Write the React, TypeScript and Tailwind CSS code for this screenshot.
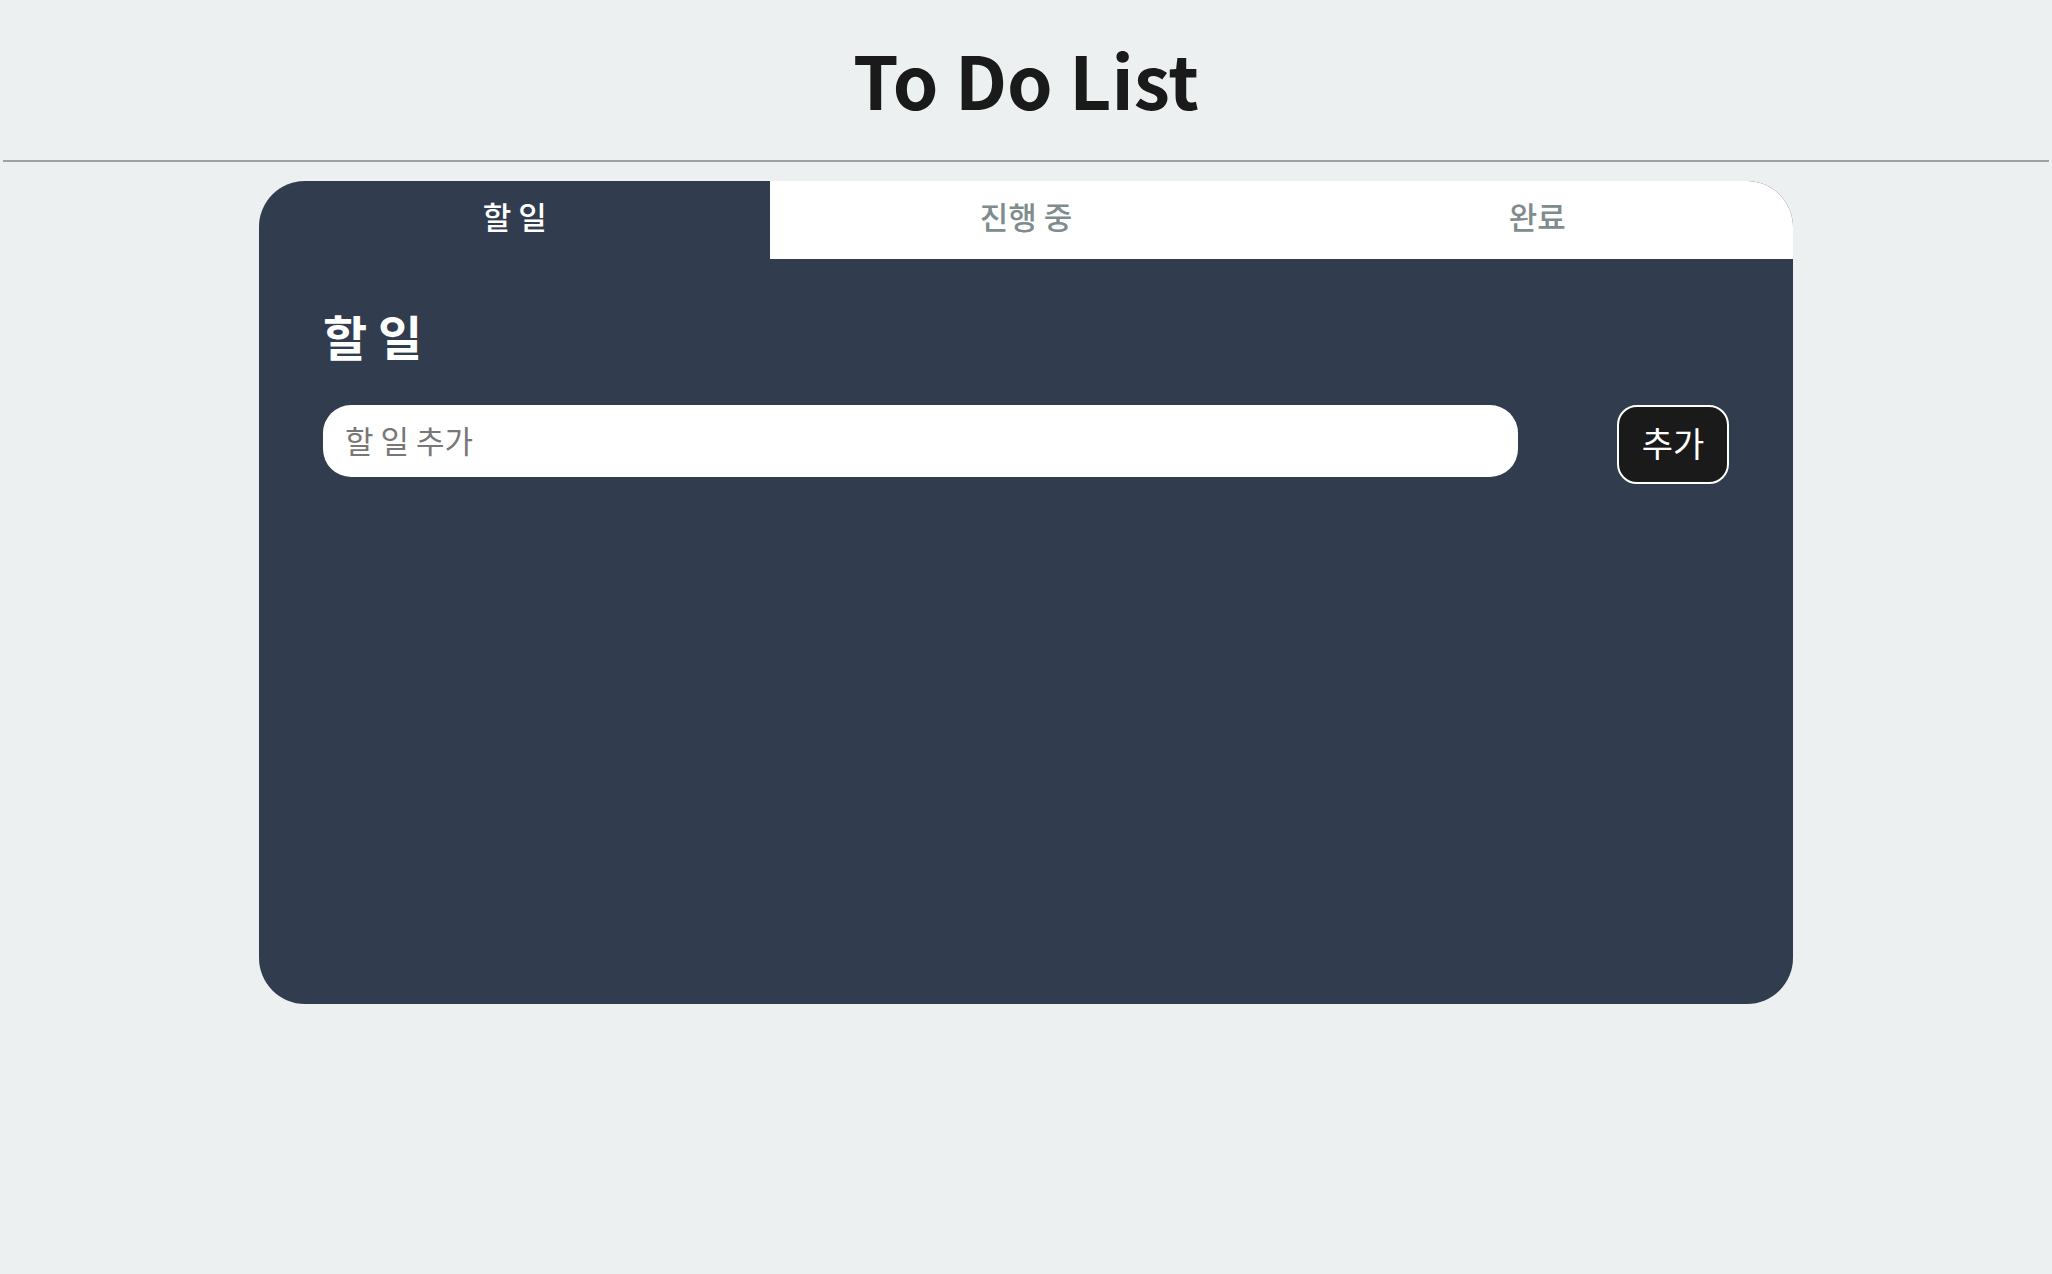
import { useState } from "react"

const tabs = ["할 일", "진행 중", "완료"]

export default function App() {
  const [active, setActive] = useState(0)
  const [text, setText] = useState("")

  return (
    <div
      className="min-h-screen bg-[#ecf0f1]"
      style={{ fontFamily: '"Noto Sans CJK KR", "Noto Sans", sans-serif' }}
    >
      {/* Header */}
      <header className="flex h-[160px] items-center justify-center pb-[4px]">
        <h1 className="text-[73px] font-bold leading-none text-[#1a1a1a]">To Do List</h1>
      </header>
      <div className="mx-[3px] h-[2px] bg-[#a0a0a0]" />

      {/* Board */}
      <main className="mx-auto mt-[19px] flex h-[823px] w-[1534px] flex-col overflow-hidden rounded-[46px] bg-[#313d4f]">
        <nav className="grid h-[78px] grid-cols-3 bg-white">
          {tabs.map((tab, i) => (
            <button
              key={tab}
              onClick={() => setActive(i)}
              className={`flex items-center justify-center pb-[8px] text-[31px] font-medium ${
                active === i ? "bg-[#313d4f] text-white" : "text-[#7f8c8d]"
              }`}
            >
              {tab}
            </button>
          ))}
        </nav>

        <section className="px-[64px] pt-[48px]">
          <h2 className="text-[48px] font-bold leading-[56px] text-white">{tabs[active]}</h2>
          <div className="mt-[42px] flex items-start justify-between">
            <input
              value={text}
              onChange={(e) => setText(e.target.value)}
              placeholder="할 일 추가"
              className="h-[72px] w-[1195px] rounded-[28px] bg-white px-[22px] pb-[4px] text-[31px] text-[#1a1a1a] outline-none placeholder:text-[#777777]"
            />
            <button className="flex h-[79px] w-[112px] items-center justify-center rounded-[20px] border-2 border-white bg-[#1a1a1a] pb-[4px] text-[34px] text-white">
              추가
            </button>
          </div>
        </section>
      </main>
    </div>
  )
}
